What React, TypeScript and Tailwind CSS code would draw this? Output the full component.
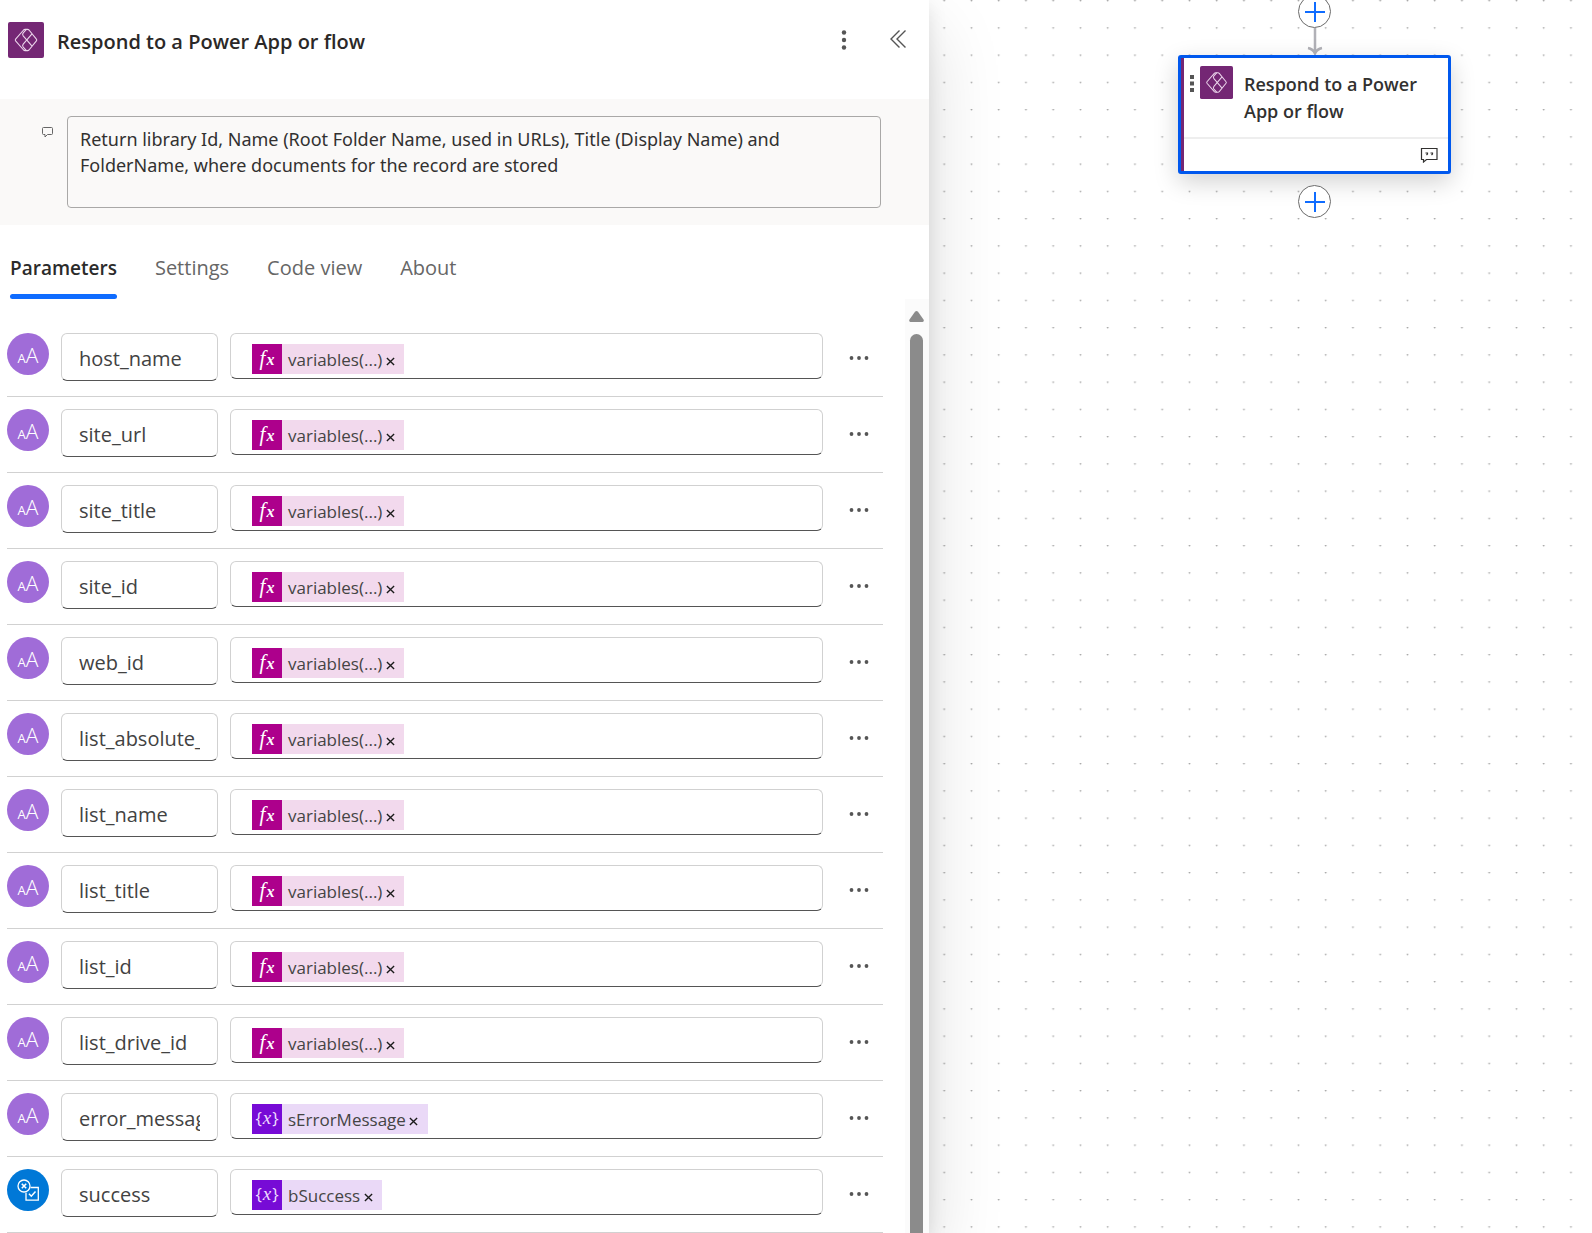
const parameters = [
  { name: 'host_name', token: 'variables(...)', kind: 'fx', type: 'text' },
  { name: 'site_url', token: 'variables(...)', kind: 'fx', type: 'text' },
  { name: 'site_title', token: 'variables(...)', kind: 'fx', type: 'text' },
  { name: 'site_id', token: 'variables(...)', kind: 'fx', type: 'text' },
  { name: 'web_id', token: 'variables(...)', kind: 'fx', type: 'text' },
  { name: 'list_absolute_url', token: 'variables(...)', kind: 'fx', type: 'text' },
  { name: 'list_name', token: 'variables(...)', kind: 'fx', type: 'text' },
  { name: 'list_title', token: 'variables(...)', kind: 'fx', type: 'text' },
  { name: 'list_id', token: 'variables(...)', kind: 'fx', type: 'text' },
  { name: 'list_drive_id', token: 'variables(...)', kind: 'fx', type: 'text' },
  { name: 'error_message', token: 'sErrorMessage', kind: 'var', type: 'text' },
  { name: 'success', token: 'bSuccess', kind: 'var', type: 'bool' },
];

const tabs = ['Parameters', 'Settings', 'Code view', 'About'];

function PowerAppIcon({ className }: { className: string }) {
  return (
    <svg viewBox="0 0 36 36" className={className} aria-hidden="true">
      <rect width="36" height="36" rx="2" fill="#742774" />
      <g fill="none" stroke="#ecd6ec" strokeWidth="1.100" strokeLinejoin="round">
        <path d="M15.600 8 7.600 17.200q-.6.8 0 1.600L15.600 28q.6.6 1.400.6h2.600q.8 0 1.400-.6L28.400 18.800q.7-.8 0-1.600L21 8q-.6-.6-1.400-.6h-2.600q-.8 0-1.400.6z" />
        <path d="M18.200 7.600 15.200 10.800q-1.200 1.500 0 3L23.800 23.800" />
        <path d="M18.200 28.400 15.200 25.200q-1.200-1.500 0-3L23.800 12.200" />
      </g>
    </svg>
  );
}

function TypeBadge({ type }: { type: string }) {
  if (type === 'bool') {
    return (
      <span className="flex size-[42px] shrink-0 items-center justify-center rounded-full bg-[#0078d7]">
        <svg viewBox="0 0 24 24" className="size-6" fill="none" stroke="#fff" strokeWidth="1.300" aria-hidden="true">
          <circle cx="8" cy="8" r="6" />
          <path d="m5.800 5.800 4.400 4.400m0-4.400-4.400 4.400" strokeWidth="1.600" />
          <path d="M14.500 9.500h7.800v12.700H10v-7.500" />
          <path d="m13 15.800 2.300 2.400 4.200-4.600" strokeWidth="1.500" />
        </svg>
      </span>
    );
  }
  return (
    <span className="flex size-[42px] shrink-0 items-baseline justify-center rounded-full bg-[#a06cd8] leading-[44px] text-white" aria-hidden="true">
      <span className="text-[13px]">A</span>
      <span className="text-[21px] font-light">A</span>
    </span>
  );
}

function Token({ label, kind }: { label: string; kind: string }) {
  const fx = kind === 'fx';
  return (
    <span className={fx ? 'flex h-[30px] items-center bg-[#f2d9ed] pr-1.5' : 'flex h-[30px] items-center bg-[#ead9f7] pr-1.5'}>
      {fx ? (
        <span className="flex h-[30px] w-[30px] items-center justify-center gap-px bg-[#ad008c] pb-0.5 font-['Liberation_Serif',serif] text-[21px] leading-[26px] text-white italic">
          <span>f</span>
          <span className="pt-1 text-[16px] font-bold">x</span>
        </span>
      ) : (
        <span className="flex h-[30px] w-[30px] items-baseline justify-center gap-px bg-[#770bd6] text-[17px] leading-[27px] text-[#efdcff]">
          <span>{'{'}</span>
          <span className="font-['Liberation_Serif',serif] text-[19px] italic">x</span>
          <span>{'}'}</span>
        </span>
      )}
      <span className="pt-0.5 pl-1.5 text-[17px] leading-[28px] text-[#444]">{label}</span>
      <button type="button" aria-label={`Remove ${label}`} className="flex w-4 items-center justify-center pt-1">
        <svg viewBox="0 0 10 10" className="size-[9px]" stroke="#1b1b1b" strokeWidth="1.500" aria-hidden="true">
          <path d="m1 1 8 8M9 1 1 9" />
        </svg>
      </button>
    </span>
  );
}

function AddStep() {
  return (
    <button type="button" aria-label="Add a step" className="flex size-[33px] items-center justify-center rounded-full border border-[#6b6b6b] bg-white">
      <svg viewBox="0 0 20 20" className="size-5" stroke="#0f6cff" strokeWidth="2" aria-hidden="true">
        <path d="M10 0v20M0 10h20" />
      </svg>
    </button>
  );
}

function Panel() {
  return (
    <section className="relative z-10 flex w-[929px] shrink-0 flex-col bg-white shadow-[0_32px_72px_rgba(0,0,0,0.14),0_6px_18px_rgba(0,0,0,0.1)]">
      <header className="flex h-[99px] items-start pt-[22px] pr-[15px] pl-2">
        <PowerAppIcon className="size-9" />
        <h1 className="ml-[13px] flex-1 text-[20px] leading-10 font-semibold text-[#2b2827]">Respond to a Power App or flow</h1>
        <button type="button" aria-label="More commands" className="flex h-9 w-7 items-center justify-center">
          <svg viewBox="0 0 6 22" className="h-[22px] w-[6px]" fill="#555" aria-hidden="true">
            <circle cx="3" cy="3.500" r="2.200" />
            <circle cx="3" cy="11" r="2.200" />
            <circle cx="3" cy="18.500" r="2.200" />
          </svg>
        </button>
        <button type="button" aria-label="Collapse panel" className="ml-6 flex h-[34px] w-8 items-center justify-center">
          <svg viewBox="0 0 18 20" className="h-5 w-[18px]" fill="none" stroke="#555" strokeWidth="1.400" aria-hidden="true">
            <path d="M10.500 1.500 2 10l8.500 8.500M16.500 1.500 8 10l8.500 8.500" />
          </svg>
        </button>
      </header>

      <div className="flex h-[126px] items-start bg-[#faf9f8] pt-[17px] pr-12 pl-[42px]">
        <svg viewBox="0 0 11 11" className="mt-[11px] size-[11px] shrink-0" fill="none" stroke="#666" aria-hidden="true">
          <path d="M1.500.5h8q1 0 1 1v5q0 1-1 1h-4l-2.500 2.500v-2.500h-1.500q-1 0-1-1v-5q0-1 1-1z" />
        </svg>
        <textarea
          aria-label="Note"
          defaultValue="Return library Id, Name (Root Folder Name, used in URLs), Title (Display Name) and FolderName, where documents for the record are stored"
          className="ml-[14px] h-[92px] min-w-0 flex-1 resize-none overflow-hidden rounded border border-[#a9a8a7] bg-transparent px-3 py-[9px] font-['Noto_Sans',sans-serif] text-[18px] leading-[26px] text-[#323130] outline-none"
        />
      </div>

      <nav role="tablist" className="flex h-[74px] items-end gap-[38px] px-[10px]">
        {tabs.map((tab, i) => (
          <button
            key={tab}
            type="button"
            role="tab"
            aria-selected={i === 0}
            className={
              i === 0
                ? 'flex h-[50px] flex-col justify-between text-[19px] leading-[38px] font-semibold text-[#2b2b2b] after:h-[5px] after:w-full after:rounded-full after:bg-[#0f6cff]'
                : 'h-[50px] pb-3 text-[20px] leading-[38px] text-[#666]'
            }
          >
            {tab}
          </button>
        ))}
      </nav>

      <div className="flex flex-1">
        <ul className="min-w-0 flex-1 pt-[22px] pr-[22px] pl-[7px]">
          {parameters.map((p) => (
            <li key={p.name} className="flex h-[76px] items-start border-b border-[#d1d1d1] pt-3">
              <TypeBadge type={p.type} />
              <input
                aria-label="Output name"
                defaultValue={p.name}
                className="ml-3 h-12 w-[157px] rounded-md border border-[#d1d1d1] border-b-[#555] bg-white px-[17px] pt-0.5 text-[20px] text-[#424242] outline-none"
              />
              <div role="group" aria-label={`${p.name} value`} className="ml-3 flex h-[46px] min-w-0 flex-1 items-center rounded-md border border-[#d1d1d1] border-b-[#555] bg-white pt-1.5 pl-[21px]">
                <Token label={p.token} kind={p.kind} />
              </div>
              <button type="button" aria-label={`${p.name} options`} className="mr-[13px] ml-[25px] flex h-[49px] w-[22px] items-center justify-center">
                <svg viewBox="0 0 20 4" className="h-1 w-5" fill="#555" aria-hidden="true">
                  <circle cx="2.500" cy="2" r="1.900" />
                  <circle cx="10" cy="2" r="1.900" />
                  <circle cx="17.500" cy="2" r="1.900" />
                </svg>
              </button>
            </li>
          ))}
        </ul>
        <div className="flex w-6 flex-col items-center bg-[#fbfbfb] pt-3 pr-0.5" aria-hidden="true">
          <svg viewBox="0 0 15 11" className="h-[11px] w-[15px] shrink-0" fill="#8b8b8b">
            <path d="M6 .8q1.500-1.600 3 0L14.500 8.500q.9 2-.9 2.500H1.400q-1.800-.5-.9-2.500z" />
          </svg>
          <div className="mt-3 w-[13px] flex-1 rounded-t-full bg-[#8b8b8b]" />
        </div>
      </div>
    </section>
  );
}

function FlowNode() {
  return (
    <article className="flex w-[273px] rounded-[3px] border-[3px] border-[#0058ee] bg-white shadow-[0_8px_24px_rgba(0,0,0,0.18)]">
      <div className="w-[3px] bg-[#742774]" />
      <div className="flex-1">
        <div className="flex h-[79px] items-start pt-2 pl-1.5">
          <svg viewBox="0 0 4 18" className="mt-2 h-[18px] w-1" fill="#555" aria-hidden="true">
            <path d="M0 1h4v4H0zM0 7.500h4v4H0zM0 14h4v4H0z" />
          </svg>
          <PowerAppIcon className="ml-1.5 size-[33px] shrink-0" />
          <h2 className="ml-[11px] pt-[5px] text-[18px] leading-[27px] font-semibold text-[#323130]">
            Respond to a Power
            <br />
            App or flow
          </h2>
        </div>
        <div className="flex h-[34px] items-center justify-end border-t-2 border-[#eee] pr-2.5">
          <svg viewBox="0 0 18 15" className="h-[15px] w-[18px]" fill="none" stroke="#323130" aria-hidden="true">
            <path d="M1.500.5h15.500v11H6.500l-3 2.500v-2.500h-2z" strokeWidth="1.200" />
            <path d="M5.500 5h2v1l-1 1M10.500 5h2v1l-1 1" strokeWidth="1.200" />
          </svg>
        </div>
      </div>
    </article>
  );
}

function Canvas() {
  return (
    <main className="relative min-w-0 flex-1 overflow-hidden bg-white">
      <svg className="absolute inset-0 size-full" aria-hidden="true">
        <pattern id="grid" x="2" y="0" width="27.25" height="27.25" patternUnits="userSpaceOnUse">
          <circle cx="13.200" cy="0.600" r="0.900" fill="#a3a3a3" />
        </pattern>
        <rect width="100%" height="100%" fill="url(#grid)" />
      </svg>
      <div className="absolute top-[-5px] left-[249px] flex flex-col items-center">
        <AddStep />
        <svg viewBox="0 0 18 27" className="h-[27px] w-[18px]" fill="none" stroke="#b1b1b7" strokeWidth="2.500" aria-hidden="true">
          <path d="M9 0v25M2 20q5 1 7 5.500q2-4.500 7-5.500" />
        </svg>
        <FlowNode />
        <div className="mt-[11px]">
          <AddStep />
        </div>
      </div>
    </main>
  );
}

export default function App() {
  return (
    <div className="flex min-h-screen bg-white font-['Open_Sans','Noto_Sans',sans-serif]">
      <Panel />
      <Canvas />
    </div>
  );
}
